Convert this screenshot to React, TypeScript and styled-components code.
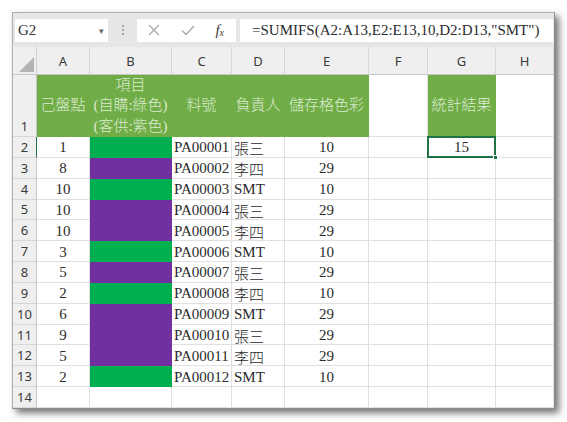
import React from 'react'
import styled, { createGlobalStyle } from 'styled-components'

const GREEN = '#00b050'
const PURPLE = '#7030a0'
const HEAD_GREEN = '#70ad47'
const GRID = '#e0e0e0'
const SERIF = `'Liberation Serif', 'Noto Sans CJK TC', serif`
const SANS = `'Noto Sans', 'Liberation Sans', sans-serif`

type Row = {
  count: number
  fill: string
  code: string
  owner: string
  color: number
}

const rows: Row[] = [
  { count: 1, fill: GREEN, code: 'PA00001', owner: '張三', color: 10 },
  { count: 8, fill: PURPLE, code: 'PA00002', owner: '李四', color: 29 },
  { count: 10, fill: GREEN, code: 'PA00003', owner: 'SMT', color: 10 },
  { count: 10, fill: PURPLE, code: 'PA00004', owner: '張三', color: 29 },
  { count: 10, fill: PURPLE, code: 'PA00005', owner: '李四', color: 29 },
  { count: 3, fill: GREEN, code: 'PA00006', owner: 'SMT', color: 10 },
  { count: 5, fill: PURPLE, code: 'PA00007', owner: '張三', color: 29 },
  { count: 2, fill: GREEN, code: 'PA00008', owner: '李四', color: 10 },
  { count: 6, fill: PURPLE, code: 'PA00009', owner: 'SMT', color: 29 },
  { count: 9, fill: PURPLE, code: 'PA00010', owner: '張三', color: 29 },
  { count: 5, fill: PURPLE, code: 'PA00011', owner: '李四', color: 29 },
  { count: 2, fill: GREEN, code: 'PA00012', owner: 'SMT', color: 10 },
]

const columns = ['A', 'B', 'C', 'D', 'E', 'F', 'G', 'H']

const GlobalStyle = createGlobalStyle`
  body {
    margin: 0;
    background: #ffffff;
  }
`

const App = (): JSX.Element => {
  return (
    <>
      <GlobalStyle />
      <Page>
        <Window>
          <Toolbar>
            <NameBox>
              G2
              <Caret>▾</Caret>
            </NameBox>
            <Grip>
              <Dot />
              <Dot />
              <Dot />
            </Grip>
            <IconBox>
              <svg width="14" height="14" viewBox="0 0 14 14">
                <path d="M2 2 L12 12 M12 2 L2 12" stroke="#a8a8a8" strokeWidth="1.2" fill="none" />
              </svg>
              <svg width="16" height="14" viewBox="0 0 16 14">
                <path d="M2 7.5 L6 11.5 L14 3" stroke="#a8a8a8" strokeWidth="1.4" fill="none" />
              </svg>
              <Fx>
                f<sub>x</sub>
              </Fx>
            </IconBox>
            <FormulaBox>=SUMIFS(A2:A13,E2:E13,10,D2:D13,"SMT")</FormulaBox>
          </Toolbar>

          <Sheet>
            <Corner>
              <Triangle />
            </Corner>
            {columns.map((c) => (
              <ColHeader key={c}>{c}</ColHeader>
            ))}

            <RowHeader $bottom>1</RowHeader>
            <TitleCell $fill={HEAD_GREEN}>己盤點</TitleCell>
            <TitleCell $fill={HEAD_GREEN}>
              項目
              <br />
              (自購:綠色)
              <br />
              (客供:紫色)
            </TitleCell>
            <TitleCell $fill={HEAD_GREEN}>料號</TitleCell>
            <TitleCell $fill={HEAD_GREEN}>負責人</TitleCell>
            <TitleCell $fill={HEAD_GREEN}>儲存格色彩</TitleCell>
            <Cell />
            <TitleCell $fill={HEAD_GREEN}>統計結果</TitleCell>
            <Cell />

            {rows.map((r, i) => (
              <React.Fragment key={r.code}>
                <RowHeader $active={i === 0}>{i + 2}</RowHeader>
                <Cell>{r.count}</Cell>
                <Cell $fill={r.fill} />
                <Cell $align="left">{r.code}</Cell>
                <Cell $align="left">{r.owner}</Cell>
                <Cell>{r.color}</Cell>
                <Cell />
                {i === 0 ? <SelectedCell>15</SelectedCell> : <Cell />}
                <Cell />
              </React.Fragment>
            ))}

            <RowHeader>14</RowHeader>
            {columns.map((c) => (
              <Cell key={c} />
            ))}
          </Sheet>
        </Window>
      </Page>
    </>
  )
}

const Page = styled.div`
  padding: 12px;
`

const Window = styled.div`
  width: 543px;
  box-sizing: border-box;
  border: 1px solid #b0b0b0;
  border-bottom-color: #8c8c8c;
  border-right-color: #8c8c8c;
  background: #ffffff;
  box-shadow: 4px 4px 7px rgba(0, 0, 0, 0.55);
`

const Toolbar = styled.div`
  height: 34px;
  display: flex;
  align-items: center;
  padding: 0 1px 0 2px;
  background: #e6e6e6;
`

const NameBox = styled.div`
  width: 93px;
  height: 23px;
  box-sizing: border-box;
  display: flex;
  align-items: center;
  justify-content: space-between;
  padding: 0 4px 0 3px;
  background: #ffffff;
  font-family: ${SERIF};
  font-size: 15px;
  color: #333333;
`

const Caret = styled.span`
  font-family: ${SANS};
  font-size: 9px;
  color: #666666;
`

const Grip = styled.div`
  width: 29px;
  display: flex;
  flex-direction: column;
  align-items: center;
  gap: 2px;
`

const Dot = styled.span`
  width: 2px;
  height: 2px;
  background: #a6a6a6;
`

const IconBox = styled.div`
  width: 99px;
  height: 23px;
  box-sizing: border-box;
  display: flex;
  align-items: center;
  justify-content: space-between;
  padding: 0 12px 0 10px;
  background: #ffffff;
`

const Fx = styled.span`
  font-family: ${SERIF};
  font-style: italic;
  font-size: 15px;
  color: #404040;

  sub {
    font-size: 10px;
    vertical-align: -1px;
  }
`

const FormulaBox = styled.div`
  flex: 1;
  height: 23px;
  margin-left: 4px;
  box-sizing: border-box;
  display: flex;
  align-items: center;
  padding-left: 12px;
  background: #ffffff;
  font-family: ${SERIF};
  font-size: 15px;
  color: #2b2b2b;
  white-space: nowrap;
`

const Sheet = styled.div`
  display: grid;
  grid-template-columns: 24px 53px 82px 60px 53px 84px 59px 68px 58px;
  grid-template-rows: 28px 62px repeat(13, 20.85px);
`

const Corner = styled.div`
  box-sizing: border-box;
  display: flex;
  align-items: flex-end;
  justify-content: flex-end;
  padding: 0 2px 2px 0;
  background: #efefef;
  border-right: 1px solid #d0d0d0;
  border-bottom: 1px solid #c6c6c6;
`

const Triangle = styled.div`
  width: 15px;
  height: 15px;
  background: #b4b4b4;
  clip-path: polygon(100% 0, 100% 100%, 0 100%);
`

const ColHeader = styled.div`
  box-sizing: border-box;
  display: flex;
  align-items: center;
  justify-content: center;
  background: #efefef;
  border-right: 1px solid #d6d6d6;
  border-bottom: 1px solid #c6c6c6;
  font-family: ${SANS};
  font-size: 13px;
  color: #3a3a3a;
`

const RowHeader = styled.div<{ $bottom?: boolean; $active?: boolean }>`
  box-sizing: border-box;
  display: flex;
  align-items: ${({ $bottom }) => ($bottom ? 'flex-end' : 'center')};
  justify-content: center;
  padding-bottom: ${({ $bottom }) => ($bottom ? '1px' : '0')};
  background: #efefef;
  border-right: 1px solid ${({ $active }) => ($active ? '#217346' : '#c6c6c6')};
  border-bottom: 1px solid #d6d6d6;
  font-family: ${SANS};
  font-size: 13px;
  color: #3a3a3a;
`

const Cell = styled.div<{ $fill?: string; $align?: 'left' | 'center' }>`
  box-sizing: border-box;
  display: flex;
  align-items: center;
  justify-content: ${({ $align }) => ($align === 'left' ? 'flex-start' : 'center')};
  padding: 2px 2px 0;
  background: ${({ $fill }) => $fill ?? '#ffffff'};
  border-right: 1px solid ${({ $fill }) => $fill ?? GRID};
  border-bottom: 1px solid ${({ $fill }) => $fill ?? GRID};
  font-family: ${SERIF};
  font-size: 15px;
  font-weight: 300;
  color: #2b2b2b;
  white-space: nowrap;
  overflow: hidden;
`

const TitleCell = styled(Cell)`
  text-align: center;
  line-height: 20.5px;
  color: #dcebd0;
  padding: 0;
`

const SelectedCell = styled(Cell)`
  position: relative;
  overflow: visible;
  z-index: 1;

  &::after {
    content: '';
    position: absolute;
    left: -1px;
    top: -1px;
    right: -1px;
    bottom: -1px;
    border: 2px solid #217346;
  }

  &::before {
    content: '';
    position: absolute;
    right: -3px;
    bottom: -3px;
    width: 5px;
    height: 5px;
    box-sizing: border-box;
    background: #217346;
    border: 1px solid #ffffff;
    z-index: 2;
  }
`

export default App
